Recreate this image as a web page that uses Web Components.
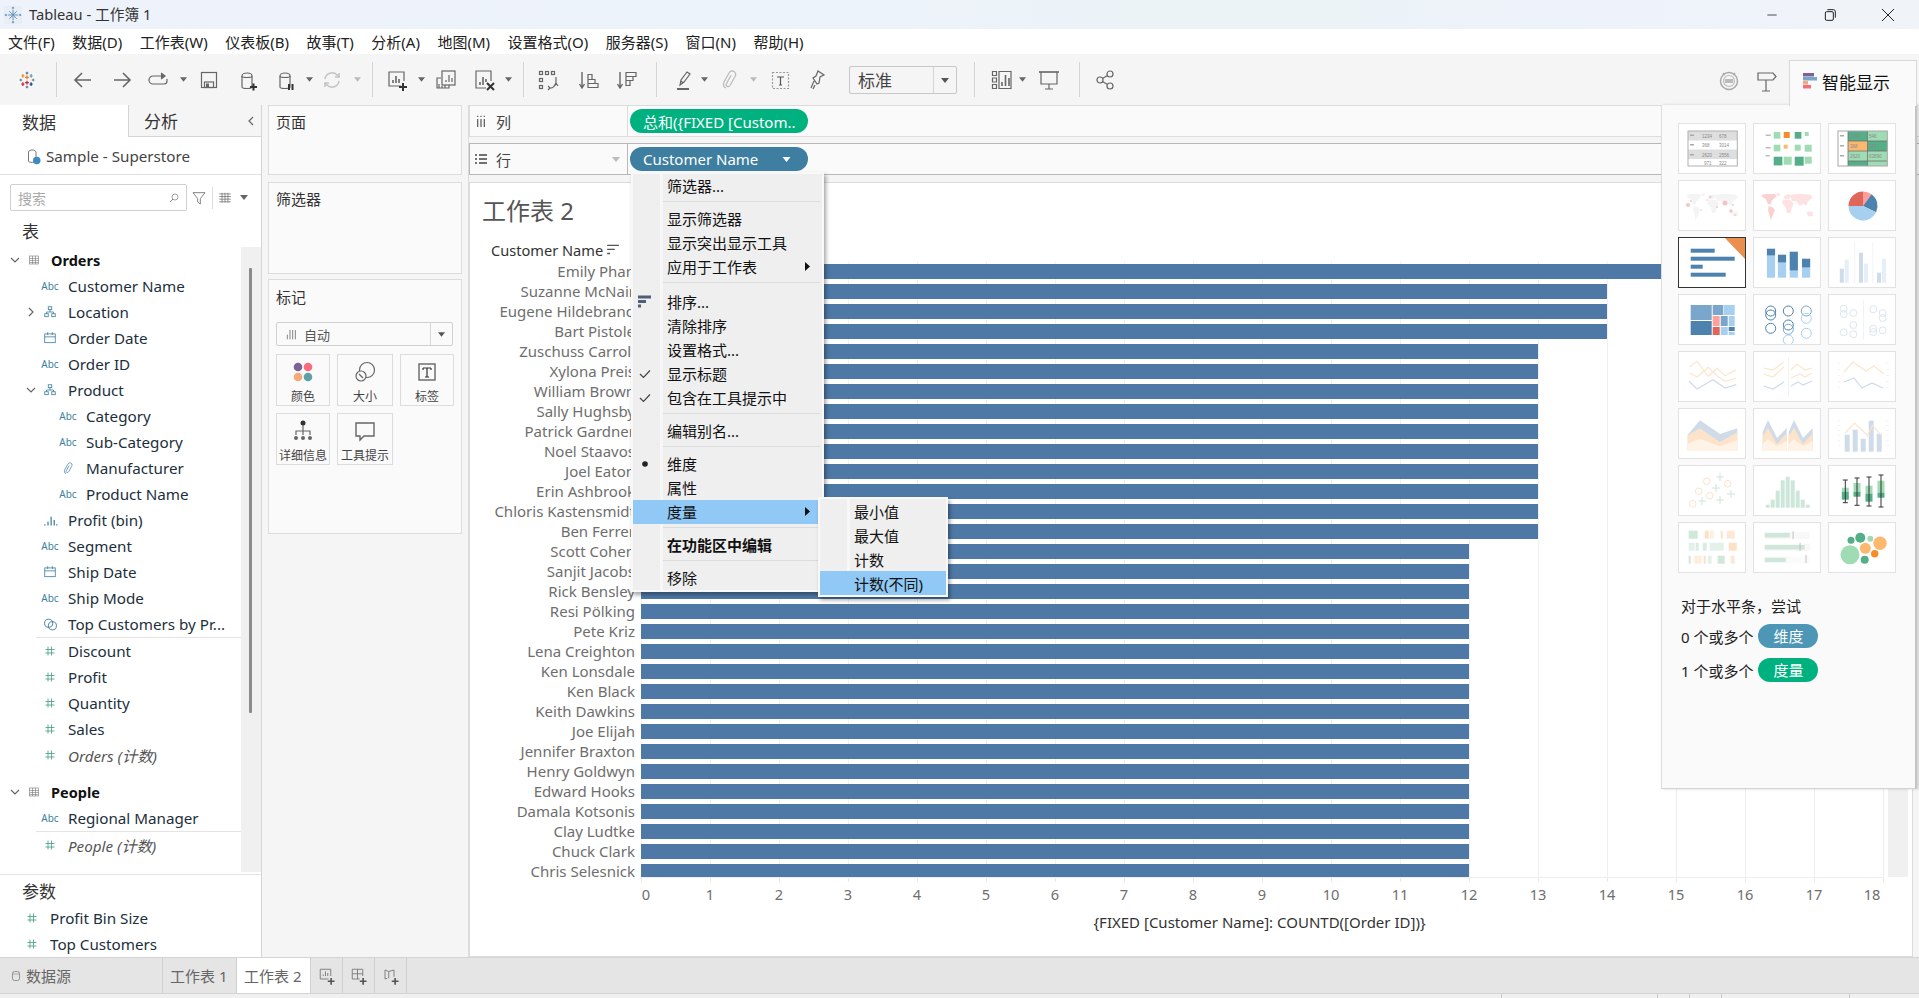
<!DOCTYPE html>
<html lang="zh">
<head>
<meta charset="utf-8">
<title>Tableau - 工作簿 1</title>
<style>
  html, body { margin: 0; height: 100%; overflow: hidden; background: #f5f5f5; }
  body { font: 14px "Noto Sans", "Noto Sans CJK SC", sans-serif; color: #222; }
</style>
</head>
<body>
<tableau-app></tableau-app>

<script>
const svg = (body, size = 24, box = 24) =>
  `<svg width="${size}" height="${size}" viewBox="0 0 ${box} ${box}" fill="none" stroke="#666" stroke-width="1.2">${body}</svg>`

const CYLINDER = '<path d="M7 8c0-4 10-4 10 0v11c0 2-10 2-10 0z"/><path d="M7 8c0 2 10 2 10 0"/>'

const ICONS = {
  logo: svg('<g stroke-width="1.6"><path stroke="#e8762c" d="M12 6v5M9.500 8.500h5"/><path stroke="#5b6f95" d="M12 1v3.500M10.300 2.700h3.400M12 19.500V23M10.300 21.300h3.400"/><path stroke="#59879b" d="M2 12h3.500M3.700 10.300v3.400M18.500 12H22M20.300 10.300v3.400"/><path stroke="#c72035" d="M12 13v5M9.500 15.500h5M6.500 15v5M4.500 17.500h4"/><path stroke="#eb912b" d="M6.500 4v5M4.500 6.500h4"/><path stroke="#7099a6" d="M17.500 4v5M15.500 6.500h4"/><path stroke="#1f457e" d="M17.500 15v5M15.500 17.500h4"/></g>', 18),
  back: svg('<path stroke-width="1.6" d="M4 12h16M11 5l-7 7 7 7"/>'),
  fwd: svg('<path stroke-width="1.6" d="M20 12H4M13 5l7 7-7 7"/>'),
  redo: svg('<path d="M14 8H6a3 3 0 0 0 0 8h11a3 3 0 0 0 3-3v-2"/><path d="M14 5l4 3-4 3" fill="#666"/>'),
  save: svg('<rect x="4.500" y="4.500" width="15" height="15"/><rect x="7.500" y="14" width="9" height="5.500"/><rect x="9" y="15.500" width="3" height="4" fill="#666" stroke="none"/>'),
  addds: svg(CYLINDER + '<path stroke="#333" stroke-width="2" d="M15 19h7M18.500 15.500v7"/>'),
  pause: svg(CYLINDER + '<path stroke="#333" stroke-width="2" d="M16 16v6M19.500 16v6"/>'),
  refresh: svg('<g stroke="#c4c4c4" stroke-width="1.6"><path d="M5 11a7 7 0 0 1 12-4l2 2"/><path d="M19 13a7 7 0 0 1-12 4l-2-2"/><path d="M19 5v4h-4M5 19v-4h4"/></g>'),
  newsheet: svg('<path d="M16 18H4V4h15v9"/>' + '<path stroke-width="1.6" d="M8 15v-3M11 15V8M14 15v-4"/><path stroke="#333" stroke-width="2" d="M14 19h8M18 15v8"/>'),
  dup: svg('<path d="M7 10H3v10h12v-3"/><rect x="8" y="3" width="13" height="14"/><path d="M12 14v-2M15 14V7M18 14v-4"/><path d="M5 20v-4M8 20v-2M11 20v-3"/>'),
  clear: svg('<path d="M14 20H4V3h15v10"/><path stroke-width="1.6" d="M8 17v-3M11 17V9M14 14v-3"/><path stroke="#333" stroke-width="2" d="M15 15l7 7M22 15l-7 7"/>'),
  swap: svg('<g stroke="#666"><rect x="3.500" y="3.500" width="3" height="3"/><rect x="9.500" y="3.500" width="3" height="3"/><rect x="15.500" y="3.500" width="3" height="3"/><rect x="3.500" y="10.500" width="3" height="3"/><rect x="3.500" y="17.500" width="3" height="3"/></g><path d="M20 9v5a6 6 0 0 1-7 6M20 15l-2 3M20 15l2 3M12 18l2 2-2 2"/>'),
  asc: svg('<path stroke-width="1.4" d="M5 4v15M2.500 16L5 20l2.500-4"/><path d="M11 19.500h10v-4H11zM11 15.500h7v-4h-7zM11 11.500h4v-5h-4z"/>'),
  desc: svg('<path stroke-width="1.4" d="M5 4v15M2.500 16L5 20l2.500-4"/><path d="M11 4.500h10v4H11zM11 8.500h7v4h-7zM11 12.500h4v5h-4z"/>'),
  pen: svg('<path d="M9 17l1-5 6-8 3 2-6 8z"/><path d="M10 13l2 2"/><path stroke-width="2" d="M6 21h12"/>'),
  clip: svg('<path stroke="#bdbdbd" stroke-width="1.3" d="M9 20c-3-1-3-4-2-6l5-9c1-2 3-2.500 5-1.500s2 3.500 1 5l-5 9c-.7 1-2 1.500-3 .8s-1-2-.4-3l4.500-8"/>'),
  note: svg('<rect x="4.500" y="4.500" width="16" height="16" stroke="#999" stroke-dasharray="2 1.500"/><path stroke="#555" d="M9 9h7M12.500 9v8M11 17h3"/>'),
  pin: svg('<path d="M13 3l6 4-4 2-1 6-2 1-4-6 3-2zM9 13l-3 7"/><path d="M8 21l2-4"/>'),
  showchart: svg('<path d="M3.500 3.500h4v4h-4zM3.500 10h4v4h-4zM3.500 16.500h4v4h-4zM10 3.500h12v17H10z"/><path stroke-width="1.6" d="M13 18v-4M16.500 18V7M20 18v-8"/>'),
  present: svg('<path stroke-width="1.6" d="M2 4h20"/><path d="M4 4v12h16V4M12 16v5M8 21h8"/>'),
  share: svg('<circle cx="7" cy="12" r="3"/><circle cx="17" cy="6" r="3"/><circle cx="17" cy="18" r="3"/><path d="M9.500 10.500l5-3M9.500 13.500l5 3"/>'),
  bot: svg('<circle cx="12" cy="13" r="8.500" stroke="#aaa" stroke-width="1.500"/><circle cx="12" cy="13" r="5.500" stroke="#bbb"/><rect x="8" y="11" width="8" height="4" fill="#bbb" stroke="none"/><path stroke="#aaa" d="M6 5l2 2M18 5l-2 2"/>'),
  sign: svg('<path d="M3 5h15l3 3.500L18 12H3zM11 12v11M7 23h8"/>'),
  iii: svg('<path stroke-width="2" stroke="#666" d="M7 9v12M12 9v12M17 9v12M7 4v2M12 4v2M17 4v2"/>', 16),
  list: svg('<path stroke="#444" stroke-width="2" d="M3 6h3M9 6h12M3 12h3M9 12h12M3 18h3M9 18h12"/>', 16),
  abcSort: svg('<path stroke="#555" stroke-width="2.400" d="M2 4h20M2 11h13M2 18h5"/>', 14),
  bars: svg('<path stroke="#666" d="M5 20v-7M9 20V6M13 20V6M17 20V6"/>', 16)
}

const FIELD_ICONS = {
  hier: svg('<g stroke="#3e7ea0" stroke-width="1.400"><rect x="9" y="3" width="6" height="5"/><rect x="3" y="15" width="6" height="5"/><rect x="15" y="15" width="6" height="5"/><path d="M12 8v4M6 15v-3h12v3"/></g>', 14),
  date: svg('<g stroke="#3e7ea0" stroke-width="1.400"><rect x="3" y="5" width="18" height="15"/><path d="M3 10h18M8 2v5M16 2v5"/></g>', 14),
  clip: svg('<path stroke="#5b8fb9" stroke-width="1.400" d="M8 20c-3-1-3-4-2-6l5-9c1-2 3-2.500 5-1.500s2 3.500 1 5l-5 9c-.7 1-2 1.500-3 .8s-1-2-.4-3l4.500-8"/>', 15),
  bin: svg('<path stroke="#3e7ea0" stroke-width="2" d="M3 20v-2M8 20v-6M13 20V6M18 20v-9M22 20v-2"/>', 15),
  set: svg('<g stroke="#3e7ea0" stroke-width="1.500"><circle cx="9" cy="10" r="6.500"/><circle cx="15" cy="14" r="6.500"/></g>', 15),
  num: svg('<path stroke="#3f9f7a" stroke-width="1.600" d="M8 3v18M15 3v18M3 9h18M3 16h18"/>', 12),
  table: svg('<g stroke="#777"><rect x="3" y="4" width="18" height="16"/><path d="M3 9h18M3 13h18M3 17h18M9 4v16M15 4v16"/></g>', 12)
}

const chevron = (dir) => dir === 'down'
  ? '<svg width="10" height="10" viewBox="0 0 10 10"><path d="M1 3l4 4 4-4" fill="none" stroke="#666" stroke-width="1.200"/></svg>'
  : '<svg width="10" height="10" viewBox="0 0 10 10"><path d="M3 1l4 4-4 4" fill="none" stroke="#666" stroke-width="1.200"/></svg>'

const caret = (color = '#666', w = 8) =>
  `<svg width="${w}" height="5" viewBox="0 0 8 5"><path d="M0 0h8L4 5z" fill="${color}"/></svg>`


// title bar
class AppTitlebar extends HTMLElement {
  constructor() {
    super()
    this.attachShadow({ mode: 'open' }).innerHTML = `
      <style>
        :host { display: flex; align-items: center; height: 29px; padding-left: 4px; font-size: 14.700px; color: #333;
          background: linear-gradient(90deg, #eef3fb 0%, #edf3fa 45%, #ebf3f6 65%, #eef3fb 85%, #f0f4f8 100%); }
        .logo { width: 18px; height: 18px; margin-right: 7px; display: flex; background: #e9eef6; }
        .title { flex: 1; line-height: 26px; padding-bottom: 2px; }
        .win { width: 58px; display: flex; justify-content: center; }
        .win svg { display: block; }
      </style>
      <span class="logo">${svg('<g stroke="#5d93bd" stroke-width="1.300"><path d="M12 5v14M5 12h14M7 7l10 10M17 7L7 17"/><path d="M12 1v3M10.500 2.500h3M12 20v3M10.500 21.500h3M1 12h3M2.500 10.500v3M20 12h3M21.500 10.500v3"/></g>', 18)}</span>
      <span class="title">Tableau - 工作簿 1</span>
      <span class="win">${svg('<path stroke="#222" d="M5 12h14"/>', 16)}</span>
      <span class="win">${svg('<g stroke="#222" stroke-width="1.500"><rect x="5" y="7" width="12" height="13" rx="2"/><path d="M8 4h9a3 3 0 0 1 3 3v9"/></g>', 16)}</span>
      <span class="win" style="margin-right:2px">${svg('<path stroke="#222" stroke-width="1.500" d="M3 3l18 18M21 3L3 21"/>', 16)}</span>
    `
  }
}

// menu bar
class AppMenubar extends HTMLElement {
  constructor() {
    super()
    const items = ['文件(F)', '数据(D)', '工作表(W)', '仪表板(B)', '故事(T)', '分析(A)', '地图(M)', '设置格式(O)', '服务器(S)', '窗口(N)', '帮助(H)']
    this.attachShadow({ mode: 'open' }).innerHTML = `
      <style>
        :host { display: flex; align-items: center; gap: 17.500px; height: 25px; padding-left: 8px; background: #fff; font-size: 15px; color: #222; white-space: nowrap; }
      </style>
      ${items.map((item) => `<span>${item}</span>`).join('')}
    `
  }
}

// toolbar, items placed by their centre with margins between them
class AppToolbar extends HTMLElement {
  constructor() {
    super()
    const items = [
      ['logo', 27], ['sep', 56], ['back', 83], ['fwd', 122], ['redo', 159], ['caret', 183], ['save', 209], ['addds', 247],
      ['pause', 285], ['caret', 309], ['refresh', 332], ['caretoff', 357], ['sep', 372], ['newsheet', 397], ['caret', 421],
      ['dup', 446], ['clear', 484], ['caret', 508], ['sep', 523], ['swap', 548], ['asc', 589], ['desc', 627], ['sep', 656],
      ['pen', 683], ['caret', 704], ['clip', 729], ['caretoff', 753], ['note', 780], ['pin', 817], ['select', 903], ['sep', 974],
      ['showchart', 1001], ['caret', 1022], ['present', 1049], ['sep', 1079], ['share', 1105], ['bot', 1728.5], ['sign', 1767]
    ]
    const widths = { sep: 1, caret: 8, caretoff: 8, select: 108 }
    let x = 0
    const html = items.map(([name, cx]) => {
      const w = widths[name] || 24
      const gap = cx - w / 2 - x
      x = cx + w / 2
      const style = `margin-left:${gap}px;width:${w}px`
      if (name === 'sep') return `<i class="sep" style="${style}"></i>`
      if (name === 'caret') return `<b style="${style}">${caret('#666', 7)}</b>`
      if (name === 'caretoff') return `<b style="${style}">${caret('#bbb', 7)}</b>`
      if (name === 'select') return `<span class="select" style="${style}"><span class="val">标准</span><span class="arrow">${caret('#555')}</span></span>`
      return `<b style="${style}">${ICONS[name]}</b>`
    }).join('')
    this.attachShadow({ mode: 'open' }).innerHTML = `
      <style>
        :host { display: flex; align-items: center; height: 51px; background: #f5f5f5; box-sizing: border-box; }
        b { display: flex; justify-content: center; align-items: center; flex: none; }
        .sep { height: 35px; background: #d4d4d4; flex: none; }
        .select { display: flex; box-sizing: border-box; height: 28px; border: 1px solid #c8c8c8; border-radius: 2px; margin-top: 1px; flex: none; font-size: 17px; color: #444; }
        .val { flex: 1; padding-left: 8px; line-height: 28px; }
        .arrow { width: 22px; border-left: 1px solid #d4d4d4; display: flex; align-items: center; justify-content: center; }
      </style>
      ${html}
    `
  }
}

// one row of the data pane
class FieldRow extends HTMLElement {
  constructor() {
    super()
    const type = this.getAttribute('type')
    const icon = type === 'abc' ? '<span class="abc">Abc</span>' : FIELD_ICONS[type]
    const arrow = this.hasAttribute('open') ? chevron('down') : this.hasAttribute('closed') ? chevron('right') : ''
    this.attachShadow({ mode: 'open' }).innerHTML = `
      <style>
        :host { display: flex; align-items: center; height: 26px; white-space: nowrap; font-size: 15.200px; color: #1c2f3d; }
        :host([italic]) { font-style: italic; color: #555; }
        :host([strong]) { font-weight: 700; color: #111; font-size: 14.500px; }
        .arrow { width: 10px; flex: none; display: flex; margin-right: 2px; }
        .icon { width: 24px; flex: none; display: flex; justify-content: center; align-items: center; }
        .abc { font-size: 10px; color: #3e7ea0; font-style: normal; font-weight: 400; }
      </style>
      <span class="arrow">${arrow}</span>
      <span class="icon">${icon}</span>
      <span style="margin-left:${this.getAttribute('gap') || 4}px"><slot></slot></span>
    `
    this.style.paddingLeft = (this.getAttribute('left') || 0) + 'px'
  }
}

// left side: data and analytics
class DataPane extends HTMLElement {
  constructor() {
    super()
    this.attachShadow({ mode: 'open' }).innerHTML = `
      <style>
        :host { display: flex; flex-direction: column; width: 261px; flex: none; background: #fff; border-right: 1px solid #d4d4d4; }
        .tabs { display: flex; height: 32px; font-size: 17px; color: #333; flex: none; }
        .tab { width: 128px; display: flex; align-items: center; padding-left: 22px; box-sizing: border-box; }
        .tab.off { flex: 1; background: #f5f5f5; border-left: 1px solid #d4d4d4; border-bottom: 1px solid #d4d4d4; position: relative; padding-left: 15px; }
        .collapse { margin-left: auto; margin-right: 5px; display: flex; transform: scaleX(-1); }
        .source { height: 37px; flex: none; display: flex; align-items: center; padding-left: 24px; gap: 4px; font-size: 15.200px; color: #444; border-bottom: 1px solid #e0e0e0; }
        .find { display: flex; align-items: center; height: 27px; margin: 9px 0 0 10px; flex: none; }
        .box { display: flex; align-items: center; justify-content: space-between; box-sizing: border-box; width: 177px; height: 27px; border: 1px solid #d0d0d0; border-radius: 2px; padding: 0 6px 0 7px; color: #aaa; font-size: 14px; }
        .find svg { display: block; }
        .filter { margin-left: 4px; display: flex; }
        .vsep { width: 1px; height: 22px; background: #ddd; margin: 0 5px 0 5px; }
        .head { height: 36px; flex: none; padding-left: 22px; padding-top: 2px; box-sizing: border-box; font-size: 17px; display: flex; align-items: center; color: #333; }
        .fields { flex: 1; display: flex; min-height: 0; margin-top: 0; }
        .list { width: 241px; flex: none; }
        .gutter { flex: 1; background: #f0f0f0; margin-bottom: 2px; display: flex; justify-content: center; margin-top: 0; }
        .thumb { width: 3px; height: 445px; margin-top: 21px; background: #8a8a8a; border-radius: 1px; margin-left: -1px; }
        .line { height: 1px; background: #e4e4e4; margin-left: 36px; }
        .params { flex: none; height: 82px; border-top: 1px solid #e4e4e4; }
        .params .head { height: 30px; padding-top: 0; }
      </style>
      <div class="tabs">
        <div class="tab">数据</div>
        <div class="tab off">分析<span class="collapse">${chevron('right')}</span></div>
      </div>
      <div class="source">
        ${svg('<path stroke="#666" d="M6 7c0-4 10-4 10 0v12c0 2-10 2-10 0z"/><circle cx="17" cy="18" r="5" fill="#3e8ac0" stroke="none"/>', 18)}
        <span>Sample - Superstore</span>
      </div>
      <div class="find">
        <div class="box"><span>搜索</span>${svg('<circle cx="14" cy="10" r="6"/><path stroke-width="1.600" d="M10 14l-6 6"/>', 12)}</div>
        <span class="filter">${svg('<path d="M3 4h18l-7 9v8l-4-3v-5z"/>', 16)}</span>
        <i class="vsep"></i>
        ${svg('<g stroke="#666"><path d="M2 5h20M2 9.500h20M2 14h20M2 18.500h20M7 3v17M12 3v17M17 3v17"/></g>', 14)}
        <span style="display:flex;margin-left:8px">${caret('#666')}</span>
      </div>
      <div class="head">表</div>
      <div class="fields">
        <div class="list">
          <field-row type="table" strong open left="10" gap="5">Orders</field-row>
          <field-row type="abc" left="26" gap="6">Customer Name</field-row>
          <field-row type="hier" closed left="26" gap="6">Location</field-row>
          <field-row type="date" left="26" gap="6">Order Date</field-row>
          <field-row type="abc" left="26" gap="6">Order ID</field-row>
          <field-row type="hier" open left="26" gap="6">Product</field-row>
          <field-row type="abc" left="44" gap="6">Category</field-row>
          <field-row type="abc" left="44" gap="6">Sub-Category</field-row>
          <field-row type="clip" left="44" gap="6">Manufacturer</field-row>
          <field-row type="abc" left="44" gap="6">Product Name</field-row>
          <field-row type="bin" left="26" gap="6">Profit (bin)</field-row>
          <field-row type="abc" left="26" gap="6">Segment</field-row>
          <field-row type="date" left="26" gap="6">Ship Date</field-row>
          <field-row type="abc" left="26" gap="6">Ship Mode</field-row>
          <field-row type="set" left="26" gap="6">Top Customers by Pr...</field-row>
          <div class="line"></div>
          <field-row type="num" left="26" gap="6">Discount</field-row>
          <field-row type="num" left="26" gap="6">Profit</field-row>
          <field-row type="num" left="26" gap="6">Quantity</field-row>
          <field-row type="num" left="26" gap="6">Sales</field-row>
          <field-row type="num" italic left="26" gap="6">Orders (计数)</field-row>
          <div style="height:11px"></div>
          <field-row type="table" strong open left="10" gap="5">People</field-row>
          <field-row type="abc" left="26" gap="6">Regional Manager</field-row>
          <div class="line"></div>
          <field-row type="num" italic left="26" gap="6">People (计数)</field-row>
        </div>
        <div class="gutter"><div class="thumb"></div></div>
      </div>
      <div class="params">
        <div class="head">参数</div>
        <field-row type="num" left="8" gap="6">Profit Bin Size</field-row>
        <field-row type="num" left="8" gap="6">Top Customers</field-row>
      </div>
    `
  }
}

// a card of the middle column
class SideCard extends HTMLElement {
  constructor() {
    super()
    this.attachShadow({ mode: 'open' }).innerHTML = `
      <style>
        :host { display: block; box-sizing: border-box; background: #fafafa; border: 1px solid #dcdcdc; padding: 6px 7px; font-size: 15px; color: #333; }
        .label { line-height: 20px; }
      </style>
      <div class="label">${this.getAttribute('label')}</div>
      <slot></slot>
    `
  }
}

class MarkButton extends HTMLElement {
  constructor() {
    super()
    this.attachShadow({ mode: 'open' }).innerHTML = `
      <style>
        :host { display: flex; flex-direction: column; align-items: center; box-sizing: border-box; height: 52px; border: 1px solid #dcdcdc; background: #fafafa; font-size: 12px; color: #444; padding-top: 5px; }
        .icon { height: 24px; display: flex; }
        .txt { margin-top: 4px; white-space: nowrap; line-height: 18px; }
      </style>
      <span class="icon"><slot name="icon"></slot></span>
      <span class="txt"><slot></slot></span>
    `
  }
}

// pages, filters and marks
class SideColumn extends HTMLElement {
  constructor() {
    super()
    this.attachShadow({ mode: 'open' }).innerHTML = `
      <style>
        :host { display: flex; flex-direction: column; width: 206px; flex: none; box-sizing: border-box; padding: 0 6px 0 6px; background: #f5f5f5; }
        .pages { height: 70px; flex: none; }
        .filters { height: 92px; flex: none; margin-top: 7px; }
        .marks { height: 255px; flex: none; margin-top: 5px; padding-top: 7px; }
        .type { display: flex; box-sizing: border-box; height: 24px; width: 177px; border: 1px solid #d0d0d0; border-radius: 2px; margin-top: 15px; font-size: 13px; color: #555; align-items: center; padding-left: 7px; }
        .type .arrow { margin-left: auto; width: 21px; height: 100%; border-left: 1px solid #d8d8d8; display: flex; align-items: center; justify-content: center; }
        .grid { display: grid; grid-template-columns: 54px 56px 54px; gap: 7px 7px; margin-top: 8px; }
      </style>
      <side-card class="pages" label="页面"></side-card>
      <side-card class="filters" label="筛选器"></side-card>
      <side-card class="marks" label="标记">
        <div class="type">${ICONS.bars}<span style="margin-left:4px">自动</span><span class="arrow">${caret('#555', 7)}</span></div>
        <div class="grid">
          <mark-button><span slot="icon">${svg('<g stroke="none"><circle cx="7" cy="7" r="4.300" fill="#7d6395"/><circle cx="17" cy="7" r="4.300" fill="#f96b7c"/><circle cx="7" cy="17" r="4.300" fill="#f5a97a"/><circle cx="17" cy="17" r="4.300" fill="#5f9fa6"/></g>')}</span>颜色</mark-button>
          <mark-button><span slot="icon">${svg('<circle cx="14" cy="10" r="7.500"/><circle cx="8" cy="16" r="5" fill="#fafafa"/><path d="M6 14l4 4"/>')}</span>大小</mark-button>
          <mark-button><span slot="icon">${svg('<rect x="4" y="4" width="16" height="16" stroke-width="1.400"/><path d="M8 8h8M12 8v9M10 17h4M8 8v2M16 8v2" stroke="#333"/>')}</span>标签</mark-button>
          <mark-button><span slot="icon">${svg('<circle cx="12" cy="4" r="2.500" fill="#333" stroke="none"/><path d="M12 6v6M5 16v-4h14v4M12 12v4"/><circle cx="5" cy="19" r="2" fill="#666" stroke="none"/><circle cx="12" cy="19" r="2" fill="#666" stroke="none"/><circle cx="19" cy="19" r="2" fill="#666" stroke="none"/>')}</span>详细信息</mark-button>
          <mark-button><span slot="icon">${svg('<path stroke-width="1.400" d="M3 4h18v13H11l-4 4v-4H3z"/>')}</span>工具提示</mark-button>
        </div>
      </side-card>
    `
  }
}

// columns or rows shelf
class VizShelf extends HTMLElement {
  constructor() {
    super()
    const dark = this.hasAttribute('dark')
    this.attachShadow({ mode: 'open' }).innerHTML = `
      <style>
        :host { display: flex; box-sizing: border-box; height: 32px; background: #fafafa; border-top: 1px solid ${dark ? '#b8b8b8' : '#dcdcdc'}; border-bottom: 1px solid ${dark ? '#b8b8b8' : '#dcdcdc'}; font-size: 15px; color: #444; flex: none; }
        .label { width: 159px; flex: none; box-sizing: border-box; border-left: 1px solid ${dark ? '#b8b8b8' : '#dcdcdc'}; border-right: 1px solid ${dark ? '#b8b8b8' : '#dcdcdc'}; display: flex; align-items: center; padding-left: 3px; gap: 7px; }
        .arrow { margin-left: auto; margin-right: 7px; display: ${dark ? 'flex' : 'none'}; }
        .pill { width: 178px; height: 24px; margin: 3px 0 0 2px; border-radius: 12px; color: #fff; display: flex; align-items: center; padding-left: 13px; box-sizing: border-box; white-space: nowrap; overflow: hidden; background: ${this.getAttribute('color')}; }
        .pill svg { margin-left: 24px; }
      </style>
      <div class="label">${ICONS[this.getAttribute('icon')]}<slot name="label"></slot><span class="arrow">${caret('#bbb')}</span></div>
      <div class="pill"><slot></slot>${dark ? caret('#fff', 9) : ''}</div>
    `
  }
}

// the bar chart of the sheet
const CUSTOMERS = [
  ['Emily Phan', 15], ['Suzanne McNair', 14], ['Eugene Hildebrand', 14], ['Bart Pistole', 14], ['Zuschuss Carroll', 13], ['Xylona Preis', 13],
  ['William Brown', 13], ['Sally Hughsby', 13], ['Patrick Gardner', 13], ['Noel Staavos', 13], ['Joel Eaton', 13], ['Erin Ashbrook', 13],
  ['Chloris Kastensmidt', 13], ['Ben Ferrer', 13], ['Scott Cohen', 12], ['Sanjit Jacobs', 12], ['Rick Bensley', 12], ['Resi Pölking', 12],
  ['Pete Kriz', 12], ['Lena Creighton', 12], ['Ken Lonsdale', 12], ['Ken Black', 12], ['Keith Dawkins', 12], ['Joe Elijah', 12],
  ['Jennifer Braxton', 12], ['Henry Goldwyn', 12], ['Edward Hooks', 12], ['Damala Kotsonis', 12], ['Clay Ludtke', 12], ['Chuck Clark', 12], ['Chris Selesnick', 12]
]
const UNIT = 69

class VizSheet extends HTMLElement {
  constructor() {
    super()
    const ticks = Array.from({ length: 19 }, (_, i) => {
      const pad = i === 0 ? 'padding-left:10px' : i === 18 ? 'padding-right:22px' : ''
      return `<span style="${pad}">${i}</span>`
    }).join('')
    this.attachShadow({ mode: 'open' }).innerHTML = `
      <style>
        :host { display: flex; flex-direction: column; flex: 1; min-height: 0; box-sizing: border-box; margin-top: 7px; margin-right: 6px; background: #fff; border: 1px solid #dcdcdc; overflow: hidden; }
        h1 { margin: 0; font-weight: 400; font-size: 24px; line-height: 32px; color: #555; padding: 12px 0 0 12px; height: 32px; flex: none; }
        .header { height: 21px; margin-top: 13px; padding-left: 21px; line-height: 20px; font-size: 14.600px; color: #333; display: flex; align-items: flex-start; gap: 3px; flex: none; white-space: nowrap; }
        .header svg { margin-top: 3px; }
        .chart { display: flex; height: 616px; flex: none; }
        .names { width: 165px; flex: none; text-align: right; font-size: 15px; color: #6e6e6e; }
        .names div { height: 20px; line-height: 21px; white-space: nowrap; }
        .plot { display: flex; flex-direction: column; width: 1243px; flex: none; margin-left: 6px; overflow: hidden;
          background: repeating-linear-gradient(90deg, #f0f0f0 0 1px, transparent 1px ${UNIT}px); }
        .plot div { height: 15px; flex: none; margin: 3px 0 2px; background: #4e79a7; }
        .scroll { width: 20px; flex: none; margin-left: 4px; background: #f0f0f0; }
        .axis { height: 5px; margin-left: 171px; width: 1243px; flex: none; border-top: 1px solid #eee; box-sizing: border-box;
          background: repeating-linear-gradient(90deg, #e8e8e8 0 1px, transparent 1px ${UNIT}px); }
        .ticks { display: flex; height: 26px; margin-left: ${171 - UNIT / 2}px; font-size: 14.600px; color: #6e6e6e; flex: none; line-height: 25px; }
        .ticks span { width: ${UNIT}px; flex: none; text-align: center; box-sizing: border-box; }
        .title { width: 1243px; margin-left: 168px; text-align: center; flex: none; font-size: 15px; color: #333; margin-top: 2px; line-height: 24px; white-space: nowrap; }
      </style>
      <h1>工作表 2</h1>
      <div class="header">Customer Name ${ICONS.abcSort}</div>
      <div class="chart">
        <div class="names">${CUSTOMERS.map(([name]) => `<div>${name}</div>`).join('')}</div>
        <div class="plot">${CUSTOMERS.map(([, count]) => `<div style="width:${count * UNIT}px"></div>`).join('')}</div>
        <div class="scroll"></div>
      </div>
      <div class="axis"></div>
      <div class="ticks">${ticks}</div>
      <div class="title">{FIXED [Customer Name]: COUNTD([Order ID])}</div>
    `
  }
}

// a row of a popup menu
class MenuRow extends HTMLElement {
  constructor() {
    super()
    const marks = {
      check: '<svg width="12" height="10" viewBox="0 0 12 10"><path d="M1 5l3.500 3.500L11 1.500" fill="none" stroke="#444" stroke-width="1.200"/></svg>',
      dot: '<svg width="6" height="6"><circle cx="3" cy="3" r="2.800" fill="#222"/></svg>',
      sort: '<svg width="14" height="14" viewBox="0 0 14 14"><path d="M0 2h13M0 6.500h8M0 11h3" stroke="#4f5f77" stroke-width="3"/></svg>'
    }
    const arrow = this.hasAttribute('more') ? '<svg class="more" width="5" height="9"><path d="M0 0l5 4.500L0 9z" fill="#111"/></svg>' : ''
    this.attachShadow({ mode: 'open' }).innerHTML = `
      <style>
        :host { display: flex; align-items: center; height: 24px; white-space: nowrap; font-size: 15px; color: #111; }
        :host([active]) { background: #90c8f6; }
        :host([strong]) { font-weight: 700; }
        .gutter { width: 27px; height: 100%; flex: none; display: flex; align-items: center; justify-content: center; box-sizing: border-box; padding-right: 3px; }
        .strip { width: 3px; height: 100%; flex: none; background: #f7f7f7; }
        :host([active]) .strip { background: transparent; }
        .text { padding-left: 4px; flex: 1; }
        .more { margin-right: 12px; }
      </style>
      <span class="gutter">${marks[this.getAttribute('mark')] || ''}</span>
      <span class="strip"></span>
      <span class="text"><slot></slot></span>
      ${arrow}
    `
  }
}

class MenuSep extends HTMLElement {
  constructor() {
    super()
    this.attachShadow({ mode: 'open' }).innerHTML = `
      <style>
        :host { display: flex; height: 9px; }
        .gutter { width: 27px; flex: none; }
        .strip { width: 3px; flex: none; background: #f7f7f7; }
        .line { flex: 1; height: 1px; margin-top: 3px; margin-right: 2px; background: #dcdcdc; }
      </style>
      <span class="gutter"></span><span class="strip"></span><span class="line"></span>
    `
  }
}

class PopMenu extends HTMLElement {
  constructor() {
    super()
    this.attachShadow({ mode: 'open' }).innerHTML = `
      <style>
        :host { display: block; position: absolute; box-sizing: border-box; background: #efefef; border: 2px solid #f8f8f8; box-shadow: 2px 3px 4px rgba(0,0,0,.35); }
      </style>
      <slot></slot>
    `
  }
}

// the show me panel, with its grid of chart types
const r = (x, y, w, h, fill) => `<rect x="${x}" y="${y}" width="${w}" height="${h}" fill="${fill}"/>`
const c = (x, y, rad, stroke, width = 1) => `<circle cx="${x}" cy="${y}" r="${rad}" fill="none" stroke="${stroke}" stroke-width="${width}"/>`
const dot = (x, y, rad, fill) => `<circle cx="${x}" cy="${y}" r="${rad}" fill="${fill}"/>`
const line = (pts, stroke, width = 1.2) => `<polyline points="${pts}" fill="none" stroke="${stroke}" stroke-width="${width}"/>`
const poly = (pts, fill) => `<polygon points="${pts}" fill="${fill}"/>`
const tiny = (x, y, s) => `<text x="${x}" y="${y}" font-size="4.500" fill="#8a8a8a" font-family="Liberation Sans, sans-serif">${s}</text>`

const DK = '#54ae87', LT = '#9fdcb4', OR = '#f58c28', LO = '#fdb870', BL = '#4e82ae', SK = '#a6cff0', MID = '#7ba6cb'
const FB = '#cfdbe8', FO = '#fde5cd', FG = '#cde6da'

const WORLD = [
  [[306,285],[322,283],[345,283],[352,290],[342,297],[336,305],[332,315],[325,312],[318,298],[308,293]],
  [[350,281],[362,281],[358,289],[352,288]],
  [[326,320],[338,322],[346,330],[340,345],[333,362],[330,350],[326,335]],
  [[372,290],[385,283],[395,288],[390,297],[375,298]],
  [[370,300],[392,300],[402,312],[396,325],[392,340],[382,340],[378,322],[368,312]],
  [[392,285],[420,282],[455,285],[458,295],[445,305],[440,318],[430,312],[420,318],[410,305],[398,305],[394,296]],
  [[440,338],[458,335],[460,350],[445,350]]
].map((p) => p.map(([x, y]) => `${((x - 280) / 3).toFixed(1)},${((y - 241) / 3).toFixed(1)}`).join(' '))

const world = (fill, fill2) => WORLD.map((p, i) => poly(p, i === 0 || i === 2 ? fill2 : fill)).join('')

const pieSlice = (a, b, fill) => {
  const pt = (deg) => [35 + 14.5 * Math.sin(deg * Math.PI / 180), 26 - 14.5 * Math.cos(deg * Math.PI / 180)].map((v) => v.toFixed(2)).join(' ')
  return `<path d="M35 26L${pt(a)}A14.500 14.500 0 ${b - a > 180 ? 1 : 0} 1 ${pt(b)}Z" fill="${fill}"/>`
}

const boxplot = (x, a, b, p, q, z) =>
  r(x - 3.5, p, 7, q - p, LT) + r(x - 3.5, q, 7, z - q, DK) + `<path d="M${x} ${a}V${b}M${x - 2.5} ${a}h5M${x - 2.5} ${b}h5" stroke="#333" stroke-width="1" fill="none"/>`

const TILES = [
  `${r(10, 8, 49, 35, '#fff')}${r(10, 8, 49, 9.5, '#dedede')}${r(10, 26.5, 49, 9.5, '#dedede')}
   ${r(12, 11.5, 4, 1.5, '#aaa')}${r(12, 21, 4, 1.5, '#aaa')}${r(12, 31, 4, 1.5, '#aaa')}
   ${tiny(24, 14.5, '1234')}${tiny(41, 14.5, '678')}${tiny(24, 24, '368')}${tiny(41, 24, '3014')}${tiny(24, 33.5, '2620')}${tiny(41, 33.5, '2556')}${tiny(26, 41.5, '971')}${tiny(41, 41.5, '322')}
   <rect x="10" y="8" width="49.300" height="35" fill="none" stroke="#b0b0b0" stroke-width="1"/>`,
  `${r(12.7, 11.5, 5, 1.5, '#bbb')}${r(12.7, 24, 5, 1.5, '#bbb')}${r(12.7, 32, 4, 1.5, '#bbb')}
   ${r(20.7, 9, 6.7, 6.7, LT)}${r(30.7, 9, 6, 6, OR)}${r(41.7, 9, 6.7, 6.7, DK)}${r(51.7, 9, 4, 4, LT)}
   ${r(20.7, 21.7, 6.7, 6.7, LT)}${r(30.7, 21.7, 4, 4, LO)}${r(41.7, 21.7, 6, 6, LT)}${r(51.7, 21.7, 7, 7, LT)}
   ${r(20.7, 33.7, 8.7, 8.7, DK)}${r(30.7, 33.7, 8, 8, LT)}${r(41.7, 33.7, 9, 9, DK)}${r(51.7, 33.7, 7, 7, LT)}`,
  `${r(10, 8, 10, 35, '#fff')}${r(20, 8, 19.5, 10, DK)}${r(39.5, 8, 20, 10, LT)}${r(20, 18, 19.5, 10, LO)}${r(39.5, 18, 20, 10, DK)}
   ${r(20, 28, 19.5, 10, LT)}${r(39.5, 28, 20, 10, LT)}${r(20, 38, 19.5, 5, DK)}${r(39.5, 38, 20, 5, LT)}
   ${r(12, 12, 4, 1.5, '#aaa')}${r(12, 22, 4, 1.5, '#aaa')}${r(12, 32, 4, 1.5, '#aaa')}
   <path d="M20 8v35M39.500 8v35M20 18h39M20 28h39M20 38h39" stroke="#6f6f6f" stroke-width=".8" fill="none"/>
   ${tiny(22, 14.5, '1234')}${tiny(41, 14.5, '546')}${tiny(22, 24.5, '368')}${tiny(41, 24.5, '310')}${tiny(22, 34.5, '2620')}${tiny(41, 34.5, '63890')}
   <rect x="10" y="8" width="49.300" height="35" fill="none" stroke="#a8a8a8" stroke-width="1"/>`,
  `${world('#f4f4f4', '#f4f4f4')}${dot(10, 25, 2, '#f2c4c6')}${dot(13, 21, 1.2, '#f8dadb')}${dot(32, 17, 1.5, '#f4cccd')}${dot(29, 20, 1, '#f8dadb')}${dot(47, 23, 2.5, '#f2c4c6')}${dot(55, 25, 1, '#f4cccd')}${dot(53, 31, 1.8, '#f2c4c6')}${dot(39, 27, 1, '#f4cccd')}${dot(23, 30, 1, '#f8dadb')}${dot(57, 35, 1, '#f4cccd')}`,
  `${world('#fee2e2', '#f8d2d0')}`,
  `${pieSlice(0, 36, '#ff9d9a')}${pieSlice(36, 115, '#4e82ae')}${pieSlice(115, 270, '#a6cff0')}${pieSlice(270, 360, '#e1665a')}`,
  `${poly('46,0 68,0 68,23', '#ea8f50')}${r(12.7, 11.7, 24, 4, BL)}${r(12.7, 19.7, 44, 4, BL)}${r(12.7, 27.7, 12, 4, BL)}${r(12.7, 35.7, 35, 4, BL)}`,
  `${r(13.9, 11.7, 8.2, 7, BL)}${r(13.9, 18.7, 8.2, 22, SK)}${r(24.9, 17.7, 8.2, 8, BL)}${r(24.9, 25.7, 8.2, 15, SK)}${r(36.7, 14.7, 8.2, 19, BL)}${r(36.7, 33.7, 8.2, 7, SK)}${r(49, 21.7, 8.2, 9, BL)}${r(49, 30.7, 8.2, 10, SK)}`,
  `${r(26.5, 5, .7, 41, '#eee')}${r(44.5, 5, .7, 41, '#eee')}${r(11.8, 31.7, 4, 14, FB)}${r(16.7, 22.7, 4, 23, '#e4eff8')}${r(31, 15.7, 4, 30, FB)}${r(35.9, 26.7, 4, 19, '#e4eff8')}${r(49, 35.7, 4, 10, FB)}${r(54, 21.7, 4, 24, '#e4eff8')}`,
  `${r(12.7, 11, 21, 15, MID)}${r(12.7, 27, 21, 14, BL)}${r(34.7, 11, 10.5, 10, MID)}${r(45.7, 11, 11, 10, SK)}${r(34.7, 22, 7, 10, '#ffa19b')}${r(42.7, 22, 7, 10, MID)}${r(50.7, 22, 6, 10, SK)}${r(34.7, 33, 7, 8, '#e1665a')}${r(42.7, 33, 7, 8, SK)}${r(50.7, 33, 6, 4, BL)}${r(50.7, 38, 6, 3, SK)}`,
  `${c(17.7, 17, 5, BL)}${c(17.7, 21, 5, BL)}${c(17.7, 34.3, 5, BL)}${c(35.3, 17, 5, BL)}${c(35.3, 31, 5, BL)}${c(35.3, 35.3, 5, MID)}${c(35.3, 46, 5, SK)}${c(53.3, 17, 5, MID)}${c(53.3, 24.3, 5, SK)}${c(53.3, 39.3, 5, SK)}`,
  `${r(35, 6, .7, 40, '#eee')}${[[15.7, 14.7], [15.7, 20], [25.3, 19], [25.3, 31], [15.7, 38.3], [25.3, 40.3], [45.3, 15.3], [54.7, 19], [54.7, 24], [45.3, 34.7], [45.3, 38], [54.7, 36.3]].map(([x, y]) => c(x, y, 3.5, '#dbe6f0')).join('')}`,
  `${line('11.7,16 19,10.3 30.3,25.3 39,17 47,24.7 58.3,18.7', FO)}${line('11.7,22 19,26 30.3,16.3 39,24.7 47,30.3 58.3,27', FO)}${line('11,30.3 19,38 35,28.7 47,37 58.3,33.7', FB)}`,
  `${r(35, 6, .7, 40, '#eee')}${line('10.7,17 20,19 31,11', FO)}${line('10.7,23 20,26 31,16', FO)}${line('10.7,35 20,38 31,31', FB)}${line('38,19 44,13 52,19 59,17', FO)}${line('38,27 47,23 52,26 59,22', FO)}${line('38,35 45,31 50,34 59,30', FB)}`,
  `${[12, 18, 24, 30, 36].map((y) => r(10, y, 2, .7, '#eee') + r(58, y, 3, .7, '#eee')).join('')}${line('16,21 25,11 38,20 46,15 56,23', FO)}${line('16,31 26,27 34,37 44,32 55,37', FB)}`,
  `${poly('9.7,26.7 22,12.3 42,26 59.3,20.3 59.3,43 9.7,43', FB)}${poly('9.7,27.3 22,20.3 42,34 59.3,24.3 59.3,43 9.7,43', '#fde3ca')}${poly('9.7,35.7 22,31 42,38.3 59.3,32.3 59.3,43 9.7,43', '#fef3e6')}`,
  `${poly('9.7,24 15,12 24,30 33.7,20 33.7,43 9.7,43', FB)}${poly('9.7,28 15,20 24,36 33.7,25 33.7,43 9.7,43', '#fde3ca')}${poly('9.7,36 15,31 24,38 33.7,33 33.7,43 9.7,43', '#fef3e6')}
   ${poly('35.7,24 41,12 50,30 59.7,20 59.7,43 35.7,43', FB)}${poly('35.7,28 41,20 50,36 59.7,25 59.7,43 35.7,43', '#fde3ca')}${poly('35.7,36 41,31 50,38 59.7,33 59.7,43 35.7,43', '#fef3e6')}`,
  `${[12, 17, 22, 27, 32, 37].map((y) => r(10, y, 2, .7, '#eee') + r(58, y, 3, .7, '#eee')).join('')}${r(16.7, 26.7, 5, 17, FB)}${r(24.7, 21.7, 5, 22, FB)}${r(32.7, 30.7, 5, 13, FB)}${r(40.7, 12.7, 5, 31, FB)}${r(48.7, 25.7, 5, 18, FB)}${line('17,25 26.5,15 39.5,27.5 44.5,17.5 53,27', FO)}`,
  `${[[28.7, 16.3], [49.7, 18.7], [20.7, 26.3], [31.7, 30.7], [14.7, 38.7]].map(([x, y]) => c(x, y, 3.3, '#fde3ca')).join('')}<path d="${[[42, 12], [38, 23], [53, 29], [24, 36], [42, 35]].map(([x, y]) => `M${x - 4} ${y}h8M${x} ${y - 4}v8`).join('')}" stroke="${FG}" stroke-width="1" fill="none"/>`,
  `${[[12.7, 39.7], [17.7, 34.7], [22.7, 25.7], [27.7, 15.3], [32.7, 11.7], [37.7, 15.3], [42.7, 25.7], [47.7, 34.7], [52.7, 39.7]].map(([x, y]) => r(x, y, 4, 42.7 - y, FG)).join('')}`,
  `${boxplot(17.3, 15, 37.7, 22.7, 26.7, 34.7)}${boxplot(29, 13, 40.3, 18, 26.7, 31.7)}${boxplot(41, 12, 41, 20.7, 28.7, 36.7)}${boxplot(53, 10, 42, 15.7, 27.7, 32.7)}`,
  `${r(10.7, 8.7, 9, 8, '#cfe8da')}${r(26.7, 8.7, 4, 8, '#fde0c5')}${r(31.7, 8.7, 4, 8, '#fdeede')}${r(42.7, 8.7, 2, 8, '#fde0c5')}${r(48.7, 8.7, 8, 8, '#fde8d6')}
   ${r(10.7, 20.7, 6, 8, '#e2f2ea')}${r(17.7, 20.7, 3, 8, '#d8ece2')}${r(24.7, 20.7, 4, 8, '#d8ece2')}${r(31.7, 20.7, 14, 8, '#e2f2ea')}${r(50.7, 20.7, 8, 8, '#fde0c5')}
   ${r(10.7, 33.7, 2, 8, '#cfe8da')}${r(15.7, 33.7, 8, 8, '#feeede')}${r(25.7, 33.7, 2, 8, '#fde0c5')}${r(29.7, 33.7, 4, 8, '#e2f2ea')}${r(39.7, 33.7, 7, 8, '#cfe8da')}${r(52.7, 33.7, 4, 8, '#fde8d6')}`,
  `${r(11.7, 10, 45, 7, '#f8f8f8')}${r(11.7, 11, 25, 4.5, '#cfe6da')}${r(39.6, 9.3, .9, 7.7, '#bbb')}${r(11.7, 22, 45, 7, '#f8f8f8')}${r(11.7, 23, 40, 4.5, '#cfe6da')}${r(46.6, 20.7, .9, 8.3, '#bbb')}${r(11.7, 34.5, 45, 7, '#fbfbfb')}${r(11.7, 35.7, 21, 4.5, '#cfe6da')}${r(52.6, 33, .9, 8, '#bbb')}`,
  `${dot(22, 32.7, 9.5, LT)}${dot(32.3, 15.7, 5, DK)}${dot(23, 18.3, 3.5, DK)}${dot(42.3, 16.7, 3, LT)}${dot(52, 21.3, 6.7, LO)}${dot(37.3, 26.3, 5.5, LO)}${dot(46.7, 31.7, 3.7, OR)}${dot(36.7, 37.7, 4, DK)}`
]

class ShowMe extends HTMLElement {
  constructor() {
    super()
    this.attachShadow({ mode: 'open' }).innerHTML = `
      <style>
        :host { display: block; position: absolute; left: 1661px; top: 60px; width: 256px; font-size: 15px; color: #222; }
        .tab { margin-left: 128px; width: 128px; height: 46px; box-sizing: border-box; background: #fafafa; border: 1px solid #d8d8d8; border-bottom: none; display: flex; align-items: center; padding: 0 0 5px 13px; gap: 5px; font-size: 17px; color: #111; position: relative; z-index: 1; }
        .tab svg { display: block; }
        .body { box-sizing: border-box; height: 684px; margin-top: -1px; background: #fafafa; border-left: 1px solid #dcdcdc; border-bottom: 1px solid #d4d4d4; border-right: 2px solid #c4c4c4; box-shadow: 2px 0 3px rgba(0,0,0,.15); padding: 18px 0 0 16px; }
        .grid { display: grid; grid-template-columns: repeat(3, 68px); grid-auto-rows: 51px; gap: 6px 7px; }
        .tile { box-sizing: border-box; background: #fff; border: 1px solid #e2e2e2; width: 68px; height: 51px; overflow: hidden; }
        .tile.on { border: 1px solid #333; }
        .tile svg { display: block; margin: -1px; }
        .hint { margin: 23px 0 0 3px; line-height: 20px; }
        .row { display: flex; align-items: center; gap: 5px; height: 24px; margin: 10px 0 0 3px; white-space: nowrap; }
        .pill { width: 60px; height: 24px; border-radius: 12px; color: #fff; text-align: center; line-height: 24px; }
      </style>
      <div class="tab">
        <svg width="14" height="16" viewBox="0 0 14 16"><rect width="11" height="3.500" fill="#7d6395"/><rect y="4" width="14" height="3.500" fill="#7ba6cb"/><rect y="8" width="5" height="3.500" fill="#f5a97a"/><rect y="12" width="8" height="3.500" fill="#f96b7c"/></svg>
        <span>智能显示</span>
      </div>
      <div class="body">
        <div class="grid">
          ${TILES.map((tile, i) => `<div class="tile${i === 6 ? ' on' : ''}"><svg width="68" height="51" viewBox="0 0 68 51">${tile}</svg></div>`).join('')}
        </div>
        <div class="hint">对于水平条，尝试</div>
        <div class="row" style="margin-top:8px"><span>0 个或多个</span><span class="pill" style="background:#4e96b5">维度</span></div>
        <div class="row"><span>1 个或多个</span><span class="pill" style="background:#00b180">度量</span></div>
      </div>
    `
  }
}

// tabs of the workbook
class SheetTabs extends HTMLElement {
  constructor() {
    super()
    this.attachShadow({ mode: 'open' }).innerHTML = `
      <style>
        :host { display: flex; height: 37px; box-sizing: border-box; background: #e5e5e5; border-top: 1px solid #d4d4d4; border-bottom: 1px solid #d4d4d4; font-size: 15px; color: #666; flex: none; }
        .item { display: flex; align-items: center; box-sizing: border-box; border-right: 1px solid #d0d0d0; flex: none; }
        .src { width: 163px; padding-left: 10px; gap: 4px; }
        .sheet { width: 74px; padding-left: 7px; white-space: nowrap; }
        .sheet.on { background: #fff; }
        .add { width: 32px; justify-content: center; }
      </style>
      <div class="item src">${svg('<rect x="5" y="3" width="14" height="18" rx="4" stroke="#777" stroke-width="1.500"/><path stroke="#777" d="M5 8h14"/>', 12)}<span>数据源</span></div>
      <div class="item sheet">工作表 1</div>
      <div class="item sheet on">工作表 2</div>
      <div class="item add">${svg('<path stroke="#777" d="M14 16H3V3h14v9M7 12v-2M10 12V6M13 12V8"/><path stroke="#555" stroke-width="2.200" d="M13 19h9M17.500 14.500v9"/>', 18)}</div>
      <div class="item add">${svg('<path stroke="#777" d="M13 16H3V3h14v9M3 9h14M10 3v13"/><path stroke="#555" stroke-width="2.200" d="M13 19h9M17.500 14.500v9"/>', 18)}</div>
      <div class="item add">${svg('<path stroke="#777" d="M4 4l5 2 7-2v9M4 4v12l3-1M9 6v9"/><path stroke="#555" stroke-width="2.200" d="M13 19h9M17.500 14.500v9"/>', 18)}</div>
    `
  }
}

class StatusBar extends HTMLElement {
  constructor() {
    super()
    const cells = [1502, 156, 32, 32, 128]
    this.attachShadow({ mode: 'open' }).innerHTML = `
      <style>
        :host { display: flex; height: 4px; background: #f0f0f0; flex: none; }
        i { display: block; box-sizing: border-box; border-right: 1px solid #c8c8c8; flex: none; }
      </style>
      ${cells.map((w) => `<i style="width:${w}px"></i>`).join('')}
    `
  }
}

class TableauApp extends HTMLElement {
  constructor() {
    super()
    this.attachShadow({ mode: 'open' }).innerHTML = `
      <style>
        :host { display: flex; flex-direction: column; width: 1919px; height: 998px; position: relative; overflow: hidden; }
        .main { display: flex; flex: 1; min-height: 0; }
        .viz { flex: 1; display: flex; flex-direction: column; min-width: 0; background: #f5f5f5; border-left: 1px solid #dcdcdc; }
        .gap { height: 6px; flex: none; }
        .ctx { left: 631px; top: 171.500px; width: 193px; }
        .sub { left: 818px; top: 497px; width: 130px; }
      </style>
      <app-titlebar></app-titlebar>
      <app-menubar></app-menubar>
      <app-toolbar></app-toolbar>
      <div class="main">
        <data-pane></data-pane>
        <side-column></side-column>
        <div class="viz">
          <viz-shelf icon="iii" color="#00b180"><span slot="label">列</span>总和({FIXED [Custom..</viz-shelf>
          <div class="gap"></div>
          <viz-shelf icon="list" color="#3e7ea0" dark><span slot="label">行</span>Customer Name</viz-shelf>
          <viz-sheet></viz-sheet>
        </div>
      </div>
      <sheet-tabs></sheet-tabs>
      <status-bar></status-bar>

      <pop-menu class="ctx">
        <menu-row>筛选器...</menu-row>
        <menu-sep></menu-sep>
        <menu-row>显示筛选器</menu-row>
        <menu-row>显示突出显示工具</menu-row>
        <menu-row more>应用于工作表</menu-row>
        <menu-sep style="height:11px"></menu-sep>
        <menu-row mark="sort">排序...</menu-row>
        <menu-row>清除排序</menu-row>
        <menu-row>设置格式...</menu-row>
        <menu-row mark="check">显示标题</menu-row>
        <menu-row mark="check">包含在工具提示中</menu-row>
        <menu-sep></menu-sep>
        <menu-row>编辑别名...</menu-row>
        <menu-sep></menu-sep>
        <menu-row mark="dot">维度</menu-row>
        <menu-row>属性</menu-row>
        <menu-row more active>度量</menu-row>
        <menu-sep></menu-sep>
        <menu-row strong>在功能区中编辑</menu-row>
        <menu-sep></menu-sep>
        <menu-row>移除</menu-row>
      </pop-menu>
      <pop-menu class="sub">
        <menu-row>最小值</menu-row>
        <menu-row>最大值</menu-row>
        <menu-row>计数</menu-row>
        <menu-row active>计数(不同)</menu-row>
      </pop-menu>
      <show-me></show-me>
    `
  }
}

// children first so the app shell finds them ready
customElements.define('app-titlebar', AppTitlebar)
customElements.define('app-menubar', AppMenubar)
customElements.define('app-toolbar', AppToolbar)
customElements.define('field-row', FieldRow)
customElements.define('data-pane', DataPane)
customElements.define('side-card', SideCard)
customElements.define('mark-button', MarkButton)
customElements.define('side-column', SideColumn)
customElements.define('viz-shelf', VizShelf)
customElements.define('viz-sheet', VizSheet)
customElements.define('menu-row', MenuRow)
customElements.define('menu-sep', MenuSep)
customElements.define('pop-menu', PopMenu)
customElements.define('show-me', ShowMe)
customElements.define('sheet-tabs', SheetTabs)
customElements.define('status-bar', StatusBar)
customElements.define('tableau-app', TableauApp)
</script>
</body>
</html>
